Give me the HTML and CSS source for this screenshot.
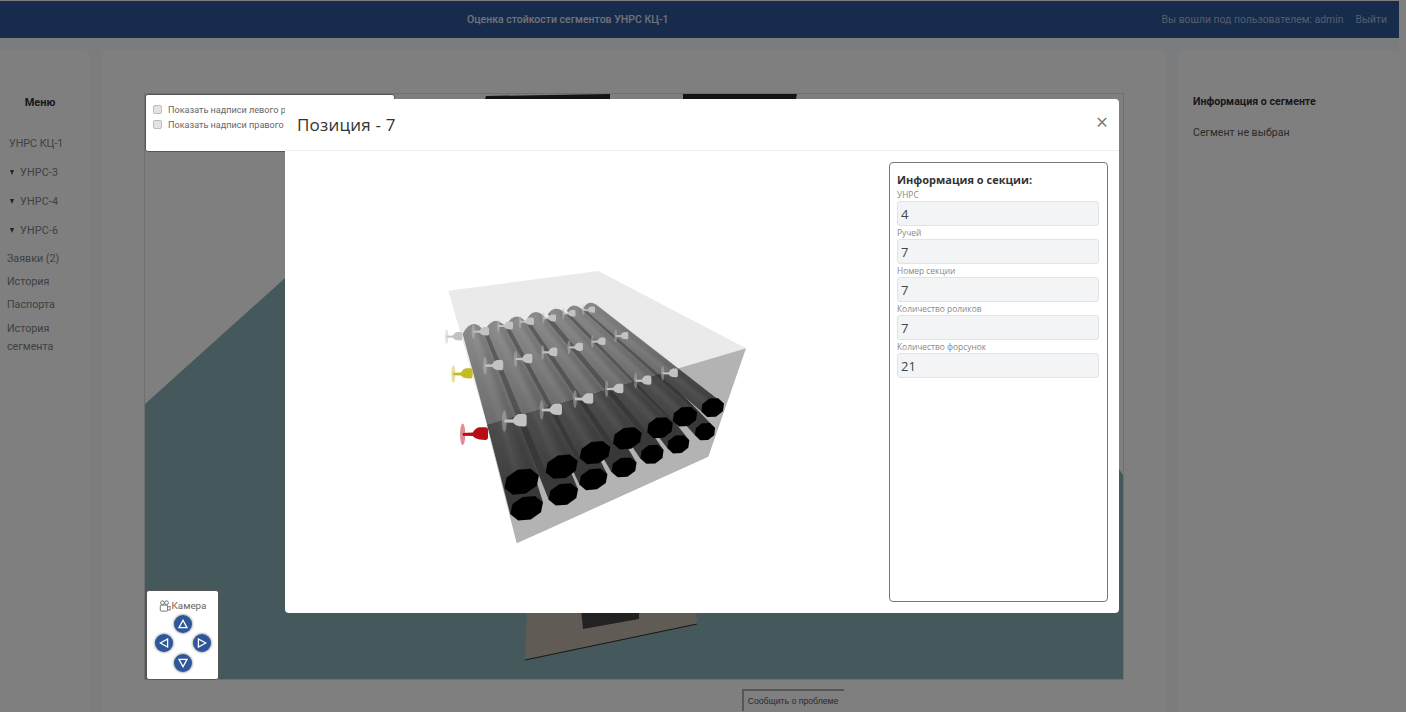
FILE: index.html
```html
<!DOCTYPE html>
<html lang="ru">
<head>
<meta charset="utf-8">
<title>Оценка стойкости сегментов УНРС КЦ-1</title>
<link rel="stylesheet" href="styles.css">
</head>
<body>
<div class="page">
  <header class="topbar">
    <div class="topbar-title">Оценка стойкости сегментов УНРС КЦ-1</div>
    <div class="topbar-user"><span>Вы вошли под пользователем: admin</span><a class="topbar-link">Выйти</a></div>
  </header>
  <div class="columns">
    <aside class="menu panel">
      <h4 class="menu-title">Меню</h4>
      <div class="plant">УНРС КЦ-1</div>
      <div class="plant caster"><span class="caret"></span>УНРС-3</div>
      <div class="plant caster"><span class="caret"></span>УНРС-4</div>
      <div class="plant caster"><span class="caret"></span>УНРС-6</div>
      <nav class="menu-links">
        <a>Заявки (2)</a>
        <a>История</a>
        <a>Паспорта</a>
        <a class="two-line">История сегмента</a>
      </nav>
    </aside>
    <main class="center panel">
      <div class="viewport">
        <svg class="scene" viewBox="145 95 978 585" width="978" height="585" aria-hidden="true">
          <rect class="scene-sky" x="145" y="95" width="978" height="585"/>
          <polygon class="scene-floor" points="145,405 285,279 1119,470 1123,476 1123,680 145,680"/>
          <polygon class="scene-dark" points="485,100 486,97 610,95 610,100"/>
          <polygon class="scene-dark" points="683,95 797,95 796,100 683,100"/>
          <polygon class="scene-slab" points="527,610 696,610 697,625 525,661"/>
          <line class="scene-edge" x1="525" y1="661" x2="697" y2="625"/>
          <polygon class="scene-unit" points="581,610 639,610 639,620 583,630"/>
        </svg>
        <div class="labels-box">
          <label class="check-row"><input class="check" type="checkbox">Показать надписи левого ручья</label>
          <label class="check-row"><input class="check" type="checkbox">Показать надписи правого ручья</label>
        </div>
        <div class="camera-box">
          <div class="camera-title">
            <svg class="camera-icon" viewBox="0 0 14 14" width="12" height="12" aria-hidden="true">
              <circle cx="4" cy="3.2" r="2.2"/><circle cx="8.8" cy="3.2" r="2.2"/>
              <rect x="1.5" y="6" width="8.5" height="7" rx="1"/>
              <path d="M10 8.2 13 7.4V12L10 11.2"/>
            </svg>Камера
          </div>
          <div class="camera-pad">
            <button class="cam-btn pad-up"><svg viewBox="0 0 10 10" width="10" height="10"><polygon points="5,1.2 9,8.6 1,8.6"/></svg></button>
            <button class="cam-btn pad-left"><svg viewBox="0 0 10 10" width="10" height="10"><polygon points="1.2,5 8.6,1 8.6,9"/></svg></button>
            <button class="cam-btn pad-right"><svg viewBox="0 0 10 10" width="10" height="10"><polygon points="8.8,5 1.4,1 1.4,9"/></svg></button>
            <button class="cam-btn pad-down"><svg viewBox="0 0 10 10" width="10" height="10"><polygon points="5,8.8 1,1.4 9,1.4"/></svg></button>
          </div>
        </div>
      </div>
      <button class="report-btn">Сообщить о проблеме</button>
    </main>
    <aside class="info panel">
      <h4 class="info-title">Информация о сегменте</h4>
      <p class="info-text">Сегмент не выбран</p>
    </aside>
  </div>
</div>

<div class="backdrop"></div>

<section class="dialog">
  <div class="dialog-head">
    <h2 class="dialog-title">Позиция - 7</h2>
    <span class="dialog-close">×</span>
  </div>
  <div class="dialog-body">
    <div class="model-wrap">
      <svg class="model" viewBox="0 0 1020 870" width="340" height="290" aria-hidden="true">
        <defs>
          <linearGradient id="rollTop" gradientUnits="userSpaceOnUse" x1="287" y1="52" x2="513" y2="820">
            <stop offset="0" stop-color="#949494"/>
            <stop offset=".5" stop-color="#6c6c6c"/>
            <stop offset=".5" stop-color="#4c4c4c"/>
            <stop offset="1" stop-color="#323232"/>
          </linearGradient>
          <linearGradient id="rollLow" gradientUnits="userSpaceOnUse" x1="287" y1="52" x2="513" y2="820">
            <stop offset="0" stop-color="#666"/>
            <stop offset=".5" stop-color="#505050"/>
            <stop offset=".5" stop-color="#383838"/>
            <stop offset="1" stop-color="#383838"/>
          </linearGradient>
          <filter id="soft" x="-30%" y="-30%" width="160%" height="160%"><feGaussianBlur stdDeviation="7"/></filter>
          <filter id="aa" x="-5%" y="-5%" width="110%" height="110%"><feGaussianBlur stdDeviation="1.2"/></filter>
          <polygon id="oct" points="1,0 .7,.72 0,1 -.7,.72 -1,0 -.7,-.72 0,-1 .7,-.72"/>
          <g id="pin">
            <ellipse class="pin-disc" cx="0" cy="0" rx="8" ry="31"/>
            <path class="pin-body" d="M0,-4 L30,-5 Q38,-18 50,-20 L68,-20 Q76,-20 76,-12 L76,8 Q76,16 68,16 L50,15 Q38,14 30,5 L0,4 Z"/>
          </g>
        </defs>
        <g filter="url(#aa)">
          <polygon class="box-top" points="85,92 535,33 978,265 200,495"/>
          <polygon class="box-front" points="200,495 978,265 865,590 290,850"/>

          <g fill="url(#rollLow)">
            <polygon points="490,155 540,148 885,504 825,526"/>
            <polygon points="435,162 495,150 808,541 742,565"/>
            <polygon points="378,175 445,165 731,570 661,596"/>
            <polygon points="315,190 390,175 650,608 574,636"/>
            <polygon points="255,205 335,195 562,643 478,673"/>
            <polygon points="190,225 275,215 474,687 386,719"/>
            <polygon points="140,250 215,235 369,727 271,763"/>
          </g>
          <g class="cap">
            <use href="#oct" transform="translate(855 515) rotate(-20) scale(32 27)"/>
            <use href="#oct" transform="translate(775 553) rotate(-20) scale(35 28)"/>
            <use href="#oct" transform="translate(696 583) rotate(-20) scale(37 29)"/>
            <use href="#oct" transform="translate(612 622) rotate(-20) scale(40 30)"/>
            <use href="#oct" transform="translate(520 658) rotate(-20) scale(45 32)"/>
            <use href="#oct" transform="translate(430 703) rotate(-20) scale(47 33)"/>
            <use href="#oct" transform="translate(320 745) rotate(-20) scale(52 36)"/>
          </g>

          <g fill="url(#rollTop)">
            <path d="M490,145 Q505,118 530,135 L911,431 L845,455 Z"/>
            <path d="M440,152 Q458,125 482,145 L830,457 L760,483 Z"/>
            <path d="M383,163 Q402,135 428,153 L758,489 L682,517 Z"/>
            <path d="M322,175 Q342,143 368,165 L664,520 L580,550 Z"/>
            <path d="M262,190 Q285,155 312,180 L569,562 L481,594 Z"/>
            <path d="M198,205 Q222,167 250,193 L472,603 L378,637 Z"/>
            <path d="M128,222 Q155,170 188,208 L357,646 L253,684 Z"/>
          </g>
          <g class="roll-shade" filter="url(#soft)">
            <line x1="522" y1="142" x2="898" y2="436"/>
            <line x1="474" y1="150" x2="816" y2="462"/>
            <line x1="420" y1="158" x2="743" y2="494"/>
            <line x1="360" y1="170" x2="648" y2="526"/>
            <line x1="304" y1="185" x2="552" y2="568"/>
            <line x1="242" y1="198" x2="454" y2="610"/>
            <line x1="180" y1="213" x2="338" y2="653"/>
          </g>
          <g class="roll-light" filter="url(#soft)">
            <line x1="157" y1="205" x2="295" y2="650"/>
            <line x1="222" y1="195" x2="415" y2="610"/>
            <line x1="285" y1="180" x2="515" y2="570"/>
            <line x1="343" y1="165" x2="615" y2="530"/>
            <line x1="403" y1="155" x2="712" y2="495"/>
            <line x1="460" y1="145" x2="787" y2="465"/>
            <line x1="510" y1="138" x2="868" y2="435"/>
          </g>
          <g class="cap">
            <use href="#oct" transform="translate(878 443) rotate(-20) scale(36 29)"/>
            <use href="#oct" transform="translate(795 470) rotate(-20) scale(39 30)"/>
            <use href="#oct" transform="translate(720 503) rotate(-20) scale(41 32)"/>
            <use href="#oct" transform="translate(622 535) rotate(-20) scale(46 33)"/>
            <use href="#oct" transform="translate(525 578) rotate(-20) scale(49 34)"/>
            <use href="#oct" transform="translate(425 620) rotate(-20) scale(51 36)"/>
            <use href="#oct" transform="translate(305 665) rotate(-20) scale(55 38)"/>
          </g>

          <g class="pin-white">
            <use href="#pin" transform="translate(490 150) scale(.46 .52)"/>
            <use href="#pin" transform="translate(430 161) scale(.48 .55)"/>
            <use href="#pin" transform="translate(370 175) scale(.5 .58)"/>
            <use href="#pin" transform="translate(300 185) scale(.55 .62)"/>
            <use href="#pin" transform="translate(235 198) scale(.58 .66)"/>
            <use href="#pin" transform="translate(160 215) scale(.62 .7)"/>
            <use href="#pin" transform="translate(587 228) scale(.5 .6)"/>
            <use href="#pin" transform="translate(517 245) scale(.52 .64)"/>
            <use href="#pin" transform="translate(447 262) scale(.55 .68)"/>
            <use href="#pin" transform="translate(368 277) scale(.58 .72)"/>
            <use href="#pin" transform="translate(287 297) scale(.66 .78)"/>
            <use href="#pin" transform="translate(195 317) scale(.72 .86)"/>
            <use href="#pin" transform="translate(728 340) scale(.6 .72)"/>
            <use href="#pin" transform="translate(647 362) scale(.62 .76)"/>
            <use href="#pin" transform="translate(560 387) scale(.66 .8)"/>
            <use href="#pin" transform="translate(465 417) scale(.72 .88)"/>
            <use href="#pin" transform="translate(365 450) scale(.8 .95)"/>
            <use href="#pin" transform="translate(253 483) scale(.88 1.05)"/>
            <use href="#pin" transform="translate(80 230) scale(.62 .7)"/>
          </g>
          <use class="pin-yellow" href="#pin" transform="translate(100 342) scale(.76 .85)"/>
          <use class="pin-red" href="#pin" transform="translate(128 523) scale(1 1.05)"/>
        </g>
      </svg>
    </div>
    <form class="section-card">
      <h5 class="section-title">Информация о секции:</h5>
      <label class="field"><span class="field-label">УНРС</span><input class="field-input" value="4" readonly></label>
      <label class="field"><span class="field-label">Ручей</span><input class="field-input" value="7" readonly></label>
      <label class="field"><span class="field-label">Номер секции</span><input class="field-input" value="7" readonly></label>
      <label class="field"><span class="field-label">Количество роликов</span><input class="field-input" value="7" readonly></label>
      <label class="field"><span class="field-label">Количество форсунок</span><input class="field-input" value="21" readonly></label>
    </form>
  </div>
</section>
</body>
</html>
```
FILE: styles.css
```css
* { box-sizing: border-box; }
html, body { height: 100%; }
html { background: #fff; }
body {
  margin: 0;
  overflow: hidden;
  font-family: Roboto, "Liberation Sans", sans-serif;
  color: #333;
}
.page {
  width: 1399px;
  height: 712px;
  overflow: hidden;
  background: #f6f9fb;
  border-top: 1px solid #fff;
}
.topbar {
  height: 37px;
  background: #2e5698;
  color: #fff;
  display: flex;
  align-items: center;
  justify-content: space-between;
  padding: 0 12px 0 467px;
  font-size: 10.5px;
}
.topbar-title { font-weight: 500; opacity: .85; }
.topbar-user { display: flex; gap: 12px; color: #a9bcd8; font-size: 10.4px; }
.columns { display: flex; gap: 11px; padding-top: 12px; }
.panel { background: #fff; border-radius: 8px 8px 0 0; height: 662px; }

.menu { width: 90px; padding-top: 46px; flex: none; border-radius: 0 8px 0 0; }
.menu-title { margin: 0 0 27px; font-size: 11px; font-weight: 700; text-align: center; line-height: 13px; color: #333; padding-right: 10px; }
.plant { height: 29px; line-height: 16px; font-size: 10.7px; padding-left: 9px; color: #7c8288; }
.caster { padding-left: 10px; letter-spacing: .2px; }
.caret {
  display: inline-block;
  width: 0;
  height: 0;
  margin: 0 6px 1px 0;
  border-left: 2.5px solid transparent;
  border-right: 2.5px solid transparent;
  border-top: 5px solid #444;
}
.menu-links { display: flex; flex-direction: column; gap: 5px; padding: 0 24px 0 7px; margin-top: -2px; }
.menu-links a { font-size: 10.7px; line-height: 18px; color: #7c8288; }
.menu-links .two-line { margin-top: 1px; }

.center { width: 1066px; padding: 44px 0 0 44px; flex: none; }
.viewport { position: relative; width: 978px; height: 585px; outline: 1px solid #dfdfdf; }
.scene { display: block; }
.scene-sky { fill: #fff; }
.scene-floor { fill: #8ab2b8; }
.scene-dark { fill: #2c2824; }
.scene-slab { fill: #c2b6ad; }
.scene-edge { stroke: #3a2f2a; stroke-width: 1.2; }
.scene-unit { fill: #444; }

.labels-box {
  position: absolute;
  left: 0;
  top: 0;
  z-index: 1050;
  width: 250px;
  height: 58px;
  background: #fff;
  border: 1px solid #555;
  border-radius: 3px;
  padding: 7px 7px;
}
.check-row {
  display: flex;
  align-items: center;
  gap: 6px;
  height: 15px;
  font-size: 9.1px;
  color: #666;
  white-space: nowrap;
}
.check {
  appearance: none;
  width: 9px;
  height: 9px;
  margin: 0;
  background: #e4e4e4;
  border: 1px solid #bcbcbc;
  border-radius: 2px;
}
.camera-box {
  position: absolute;
  left: 1px;
  bottom: -1px;
  z-index: 1050;
  width: 73px;
  height: 90px;
  background: #fff;
  border: 1px solid #555;
  border-radius: 3px;
  padding-top: 8px;
}
.camera-title {
  display: flex;
  justify-content: center;
  align-items: center;
  gap: 1px;
  font-size: 9.8px;
  line-height: 14px;
  color: #666;
}
.camera-icon { fill: none; stroke: #666; stroke-width: 1; }
.camera-pad {
  display: grid;
  grid-template-columns: repeat(3, 19px);
  grid-template-rows: repeat(3, 19.5px);
  justify-content: center;
  margin-top: 1px;
}
.cam-btn {
  width: 18px;
  height: 18px;
  padding: 0;
  border: 0;
  border-radius: 50%;
  background: #2e5698;
  box-shadow: 0 0 2px 1px #b5b5b5;
  display: flex;
  align-items: center;
  justify-content: center;
  justify-self: center;
  align-self: center;
}
.cam-btn polygon { fill: none; stroke: #fff; stroke-width: 1.3; }
.pad-up { grid-column: 2; grid-row: 1; }
.pad-left { grid-column: 1; grid-row: 2; }
.pad-right { grid-column: 3; grid-row: 2; }
.pad-down { grid-column: 2; grid-row: 3; }

.report-btn {
  display: block;
  margin: 10px 0 0 597px;
  width: 102px;
  height: 22px;
  padding: 0 2px 0 0;
  background: #fff;
  border: 2px solid #aaa;
  border-width: 2px 0 0 2px;
  font-family: "Liberation Sans", Arial, sans-serif;
  font-size: 8.7px;
  color: #555;
}

.info { flex: 1; padding: 45px 15px 0; }
.info-title { margin: 0; font-size: 10.6px; font-weight: 700; line-height: 14px; color: #333; }
.info-text { margin: 17px 0 0; font-size: 10.6px; line-height: 14px; color: #555; }

.backdrop { position: fixed; inset: 0; z-index: 1040; background: rgba(0, 0, 0, .5); }

.dialog {
  position: fixed;
  left: 285px;
  top: 99px;
  width: 834px;
  height: 514px;
  z-index: 1060;
  background: #fff;
  border-radius: 4px;
  display: flex;
  flex-direction: column;
  font-family: "Open Sans", "Noto Sans", sans-serif;
}
.dialog-head {
  height: 52px;
  flex: none;
  display: flex;
  align-items: center;
  justify-content: space-between;
  padding: 0 11px 0 12px;
  border-bottom: 1px solid #eee;
}
.dialog-title { margin: 0; font-size: 17px; font-weight: 400; color: #333; letter-spacing: .2px; }
.dialog-close { font-size: 21px; line-height: 21px; color: #777; margin-top: -4px; }
.dialog-body { flex: 1; display: flex; justify-content: space-between; padding: 11px; min-height: 0; }
.model-wrap { padding: 98px 0 0 124px; }
.model { display: block; }
.box-top { fill: #ebeaeb; }
.box-front { fill: #b3b3b3; }
.cap { fill: #030303; }
.roll-shade line { stroke: #000; stroke-width: 9; stroke-opacity: .16; }
.roll-light line { stroke: #fff; stroke-width: 18; stroke-opacity: .06; }
.pin-disc { fill: currentColor; opacity: .45; }
.pin-body { fill: currentColor; }
.pin-white { color: #c2c2c2; }
.pin-yellow { color: #c4bb25; }
.pin-red { color: #b90d18; }

.section-card {
  width: 219px;
  height: 440px;
  border: 1px solid #777;
  border-radius: 4px;
  padding: 9px 7px;
}
.section-title { margin: 0; font-size: 11px; line-height: 16px; font-weight: 700; color: #333; }
.field { display: block; }
.field-label { display: block; height: 13px; font-size: 8.4px; line-height: 13px; color: #888; }
.field-input {
  display: block;
  width: 202px;
  height: 25px;
  padding: 0 3px;
  background: #f3f4f6;
  border: 1px solid #e2e3e6;
  border-radius: 3px;
  font-family: inherit;
  font-size: 13px;
  color: #444;
  outline: none;
}
```
